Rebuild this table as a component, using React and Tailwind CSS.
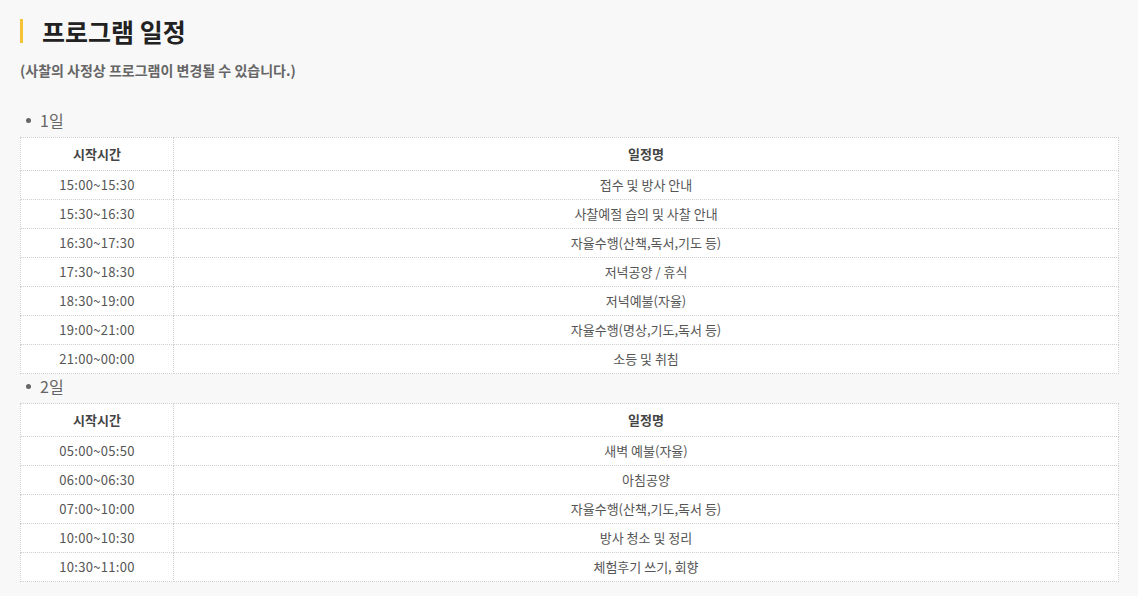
import React from "react";

const days = [
  {
    day: "1일",
    rows: [
      ["15:00~15:30", "접수 및 방사 안내"],
      ["15:30~16:30", "사찰예절 습의 및 사찰 안내"],
      ["16:30~17:30", "자율수행(산책,독서,기도 등)"],
      ["17:30~18:30", "저녁공양 / 휴식"],
      ["18:30~19:00", "저녁예불(자율)"],
      ["19:00~21:00", "자율수행(명상,기도,독서 등)"],
      ["21:00~00:00", "소등 및 취침"],
    ],
  },
  {
    day: "2일",
    rows: [
      ["05:00~05:50", "새벽 예불(자율)"],
      ["06:00~06:30", "아침공양"],
      ["07:00~10:00", "자율수행(산책,기도,독서 등)"],
      ["10:00~10:30", "방사 청소 및 정리"],
      ["10:30~11:00", "체험후기 쓰기, 회향"],
    ],
  },
];

const cell = "border border-dotted border-[#cfcfcf] text-center";

const Schedule = ({ day, rows }) => (
  <div>
    <h3 className="flex items-center h-[29px] pb-[5px] pl-[6px] text-[16px] text-[#666]">
      <span className="w-[5px] h-[5px] rounded-full bg-[#666] mr-[9px]" />
      {day}
    </h3>
    <table className="w-full border-collapse bg-white text-[13px] text-[#555]">
      <thead>
        <tr className="h-[33px]">
          <th className={`${cell} w-[153px] font-bold text-[#444]`}>시작시간</th>
          <th className={`${cell} font-bold text-[#444]`}>일정명</th>
        </tr>
      </thead>
      <tbody>
        {rows.map(([time, name]) => (
          <tr key={time} className="h-[29px]">
            <td className={`${cell} tracking-[0.3px]`}>{time}</td>
            <td className={cell}>{name}</td>
          </tr>
        ))}
      </tbody>
    </table>
  </div>
);

const App = () => {
  return (
    <div
      className="min-h-[596px] bg-[#f8f8f8] pl-[20px] pr-[19px] pt-[19px]"
      style={{ fontFamily: '"Noto Sans CJK KR", "Noto Sans", sans-serif' }}
    >
      <div className="flex items-center h-[24px]">
        <span className="w-[3px] h-[24px] bg-[#f5c334]" />
        <h2 className="ml-[19px] text-[25px] font-bold text-[#222] leading-none">
          프로그램 일정
        </h2>
      </div>
      <p className="mt-[17px] text-[14px] font-bold text-[#666]">
        (사찰의 사정상 프로그램이 변경될 수 있습니다.)
      </p>
      <div className="mt-[27px]">
        {days.map((d) => (
          <Schedule key={d.day} day={d.day} rows={d.rows} />
        ))}
      </div>
    </div>
  );
};

export default App;
